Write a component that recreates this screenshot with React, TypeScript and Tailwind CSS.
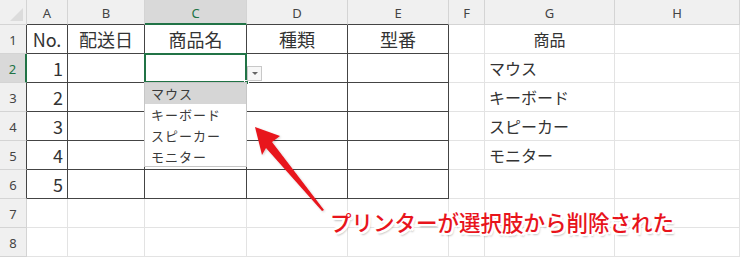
import React from 'react';

const cols = ['A', 'B', 'C', 'D', 'E', 'F', 'G', 'H'];
const jp = "font-['Noto_Sans_CJK_JP',sans-serif]";

const table: Record<string, string> = {
  'A1': 'No.', 'B1': '配送日', 'C1': '商品名', 'D1': '種類', 'E1': '型番',
  'A2': '1', 'A3': '2', 'A4': '3', 'A5': '4', 'A6': '5',
  'G1': '商品', 'G2': 'マウス', 'G3': 'キーボード', 'G4': 'スピーカー', 'G5': 'モニター',
};

const items = ['マウス', 'キーボード', 'スピーカー', 'モニター'];

// active cell C2 with the validation dropdown opened under it
function ActiveCell() {
  return (
    <div className="relative bg-white border-r border-b border-[#444]">
      <div className="absolute -left-[1px] -top-[1px] -right-[1px] -bottom-[1px] border-2 border-[#217346]" />
      <div className="absolute -right-[3px] -bottom-[3px] w-[5px] h-[5px] bg-[#217346] border border-white" />
      <div className="absolute -right-[16px] top-[12px] w-[15px] h-[15px] bg-[#f7f7f7] border border-[#c8c8c8] flex items-center justify-center">
        <div className="w-0 h-0 border-l-[3px] border-r-[3px] border-t-[3px] border-l-transparent border-r-transparent border-t-[#666]" />
      </div>
      <div className={`absolute -left-[1px] top-full w-[103px] h-[85px] z-10 bg-white border border-[#c6c6c6] ${jp} text-[13px] text-[#3a3a3a]`}>
        {items.map((t, i) => (
          <div key={t} className={`h-[21px] flex items-center pl-[6px] tracking-[1px] ${i === 0 ? 'bg-[#d6d6d6]' : ''}`}>
            {t}
          </div>
        ))}
      </div>
    </div>
  );
}

function Cell({ col, row }: { col: string; row: number }) {
  if (col === 'C' && row === 2) return <ActiveCell />;
  const text = table[`${col}${row}`];
  const inTable = row <= 6 && 'ABCDE'.includes(col);
  const border = inTable ? 'border-r border-b border-[#444]' : 'border-r border-b border-[#e3e3e3]';
  let align = 'justify-center';
  let size = 'text-[18px]';
  if (col === 'A' && row > 1) align = 'justify-end pr-1';
  if (col === 'G' && row > 1) {
    align = 'justify-start pl-1';
    size = 'text-[16px]';
  }
  if (col === 'G' && row === 1) size = 'text-[16px]';
  return (
    <div className={`flex items-center bg-white ${border} ${align} ${size} ${jp} text-[#333]`}>
      {text}
    </div>
  );
}

export default function App() {
  return (
    <div className="relative w-[740px] h-[257px] overflow-hidden bg-white">
      <div className="grid grid-cols-[27px_41px_77px_102px_101px_101px_36px_130px_125px] grid-rows-[25px_repeat(8,29px)]">
        {/* corner */}
        <div className="relative bg-[#f0f0f0] border-r border-b border-[#d4d4d4]">
          <div className="absolute right-[3px] bottom-[3px] w-0 h-0 border-l-[13px] border-l-transparent border-b-[13px] border-b-[#dcdcdc]" />
        </div>
        {cols.map((c) => {
          const sel = c === 'C';
          const dark = 'ABCDE'.includes(c);
          return (
            <div
              key={c}
              className={`flex items-center justify-center pt-[4px] text-[13px] font-['Noto_Sans',sans-serif] border-r border-[#d4d4d4] ${
                sel ? 'bg-[#d9d9d9] text-[#217346] border-b-2 border-b-[#217346]' : `bg-[#f0f0f0] text-[#444] border-b ${dark ? 'border-b-[#444]' : 'border-b-[#d4d4d4]'}`
              }`}
            >
              {c}
            </div>
          );
        })}
        {Array.from({ length: 8 }, (_, i) => i + 1).map((r) => (
          <React.Fragment key={r}>
            <div
              className={`flex items-center justify-center pt-[4px] text-[13px] font-['Noto_Sans',sans-serif] border-b border-[#d4d4d4] ${
                r === 2 ? 'bg-[#d9d9d9] text-[#217346] border-r-2 border-r-[#217346]' : `bg-[#f0f0f0] text-[#444] border-r ${r <= 6 ? 'border-r-[#444]' : 'border-r-[#d4d4d4]'}`
              }`}
            >
              {r}
            </div>
            {cols.map((c) => (
              <Cell key={c} col={c} row={r} />
            ))}
          </React.Fragment>
        ))}
      </div>

      {/* callout arrow */}
      <svg className="absolute left-0 top-0 z-20" width="740" height="257" viewBox="0 0 740 257">
        <defs>
          <filter id="sh" x="-20%" y="-20%" width="140%" height="140%">
            <feDropShadow dx="1" dy="1" stdDeviation="1" floodColor="#000" floodOpacity="0.2" />
          </filter>
        </defs>
        <path
          d="M255 127 L280 136 L272 142 L324 210 L322 211 L266 148 L262 155 Z"
          fill="#e8141c"
          filter="url(#sh)"
        />
      </svg>

      {/* callout text */}
      <div
        className={`absolute left-[330px] top-[208px] z-20 text-[21.5px] leading-[28px] font-medium text-[#e8141c] ${jp} [text-shadow:-2px_0_0_#fff,2px_0_0_#fff,0_-2px_0_#fff,0_2px_0_#fff,-2px_-2px_0_#fff,2px_2px_0_#fff,-2px_2px_0_#fff,2px_-2px_0_#fff,2px_3px_2px_rgba(0,0,0,0.25)]`}
      >
        プリンターが選択肢から削除された
      </div>
    </div>
  );
}
